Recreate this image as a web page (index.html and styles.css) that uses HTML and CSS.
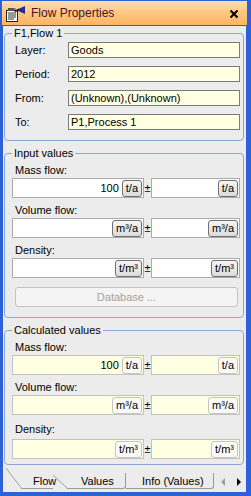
FILE: index.html
```html
<!doctype html>
<html>
<head>
<meta charset="utf-8">
<link rel="stylesheet" href="styles.css">
<title>Flow Properties</title>
</head>
<body>
<div class="window">
  <div class="titlebar">
    <svg class="title-icon" width="21" height="18" viewBox="0 0 21 18">
      <path d="M1 5 L11 3 L13 16 L3 17 Z" fill="#8a8a8a"/>
      <rect x="1.5" y="5.5" width="11" height="11" fill="#fff" stroke="#222"/>
      <path d="M3 8h8M3 10h8M3 12h8M3 14h6" stroke="#333" stroke-width="1"/>
      <rect x="3" y="3" width="6" height="3" fill="#555"/>
      <path d="M11 5 L20 1 L20 9 Z" fill="#1c2f9a"/>
      <path d="M10 7 L14 4" stroke="#222" stroke-width="1.5"/>
    </svg>
    <span class="title">Flow Properties</span>
    <svg class="close" width="10" height="10" viewBox="0 0 10 10">
      <path d="M1.5 1.5L8.5 8.5M8.5 1.5L1.5 8.5" stroke="#000" stroke-width="2"/>
    </svg>
  </div>

  <div class="panel">
    <fieldset class="group group-flow">
      <legend>F1,Flow 1</legend>
      <div class="prop-row"><span class="prop-label">Layer:</span><span class="prop-value">Goods</span></div>
      <div class="prop-row"><span class="prop-label">Period:</span><span class="prop-value">2012</span></div>
      <div class="prop-row"><span class="prop-label">From:</span><span class="prop-value">(Unknown),(Unknown)</span></div>
      <div class="prop-row"><span class="prop-label">To:</span><span class="prop-value">P1,Process 1</span></div>
    </fieldset>

    <fieldset class="group group-input">
      <legend>Input values</legend>
      <div class="field">
        <div class="field-label">Mass flow:</div>
        <div class="field-boxes">
          <div class="num-box num-main"><span class="num">100</span><span class="unit">t/a</span></div>
          <span class="pm">±</span>
          <div class="num-box num-dev"><span class="num"></span><span class="unit">t/a</span></div>
        </div>
      </div>
      <div class="field">
        <div class="field-label">Volume flow:</div>
        <div class="field-boxes">
          <div class="num-box num-main"><span class="num"></span><span class="unit">m³/a</span></div>
          <span class="pm">±</span>
          <div class="num-box num-dev"><span class="num"></span><span class="unit">m³/a</span></div>
        </div>
      </div>
      <div class="field">
        <div class="field-label">Density:</div>
        <div class="field-boxes">
          <div class="num-box num-main"><span class="num"></span><span class="unit">t/m³</span></div>
          <span class="pm">±</span>
          <div class="num-box num-dev"><span class="num"></span><span class="unit">t/m³</span></div>
        </div>
      </div>
      <button class="db-button" disabled>Database ...</button>
    </fieldset>

    <fieldset class="group group-calc">
      <legend>Calculated values</legend>
      <div class="field">
        <div class="field-label">Mass flow:</div>
        <div class="field-boxes">
          <div class="num-box num-main"><span class="num">100</span><span class="unit">t/a</span></div>
          <span class="pm">±</span>
          <div class="num-box num-dev"><span class="num"></span><span class="unit">t/a</span></div>
        </div>
      </div>
      <div class="field">
        <div class="field-label">Volume flow:</div>
        <div class="field-boxes">
          <div class="num-box num-main"><span class="num"></span><span class="unit">m³/a</span></div>
          <span class="pm">±</span>
          <div class="num-box num-dev"><span class="num"></span><span class="unit">m³/a</span></div>
        </div>
      </div>
      <div class="field field-last">
        <div class="field-label">Density:</div>
        <div class="field-boxes">
          <div class="num-box num-main"><span class="num"></span><span class="unit">t/m³</span></div>
          <span class="pm">±</span>
          <div class="num-box num-dev"><span class="num"></span><span class="unit">t/m³</span></div>
        </div>
      </div>
    </fieldset>

    <div class="tabs">
      <span class="slant slant-a"></span>
      <span class="tab tab-flow">Flow</span>
      <span class="slant slant-b"></span>
      <span class="tab tab-values">Values</span>
      <span class="tab tab-info">Info (Values)</span>
      <svg class="tab-scroll" width="32" height="12" viewBox="0 0 32 12">
        <path d="M11 2 L7 6 L11 10 Z" fill="#a0a0a0"/>
        <path d="M23 2 L27 6 L23 10 Z" fill="#000"/>
      </svg>
    </div>
  </div>
</div>
</body>
</html>
```

FILE: styles.css
```css
body {
    margin: 0;
    font-family: "Liberation Sans", Arial, sans-serif;
    font-size: 11px;
    color: #000;
}
.window {
    width: 251px;
    height: 496px;
    box-sizing: border-box;
    padding: 1px 5px 4px 3px;
    background: #2e60d8;
    display: flex;
    flex-direction: column;
}
.titlebar {
    height: 24px;
    margin: 0 -1px 1px -1px;
    padding: 0 8px 0 3px;
    display: flex;
    align-items: center;
    background: linear-gradient(#ffe0b0, #fdc883 45%, #fbb563);
}
.title-icon {
    margin-top: 1px;
}
.title {
    flex: 1;
    margin-left: 5px;
    font-size: 12px;
    color: #4a1030;
}
.close {
    margin-top: 1px;
}
.panel {
    flex: 1;
    background: #ececec;
    display: flex;
    flex-direction: column;
}

/* group boxes */
.group {
    margin: 6px 2px 0 1px;
    padding: 4px 3px 10px 7px;
    border: 1px solid #8ca6d4;
    border-radius: 4px;
    min-width: 0;
}
.group legend {
    padding: 0 2px;
    line-height: 13px;
}
.group-flow {
    margin-top: 1px;
    padding-top: 2px;
}
.group-calc {
    padding-bottom: 5px;
}

.prop-row {
    display: flex;
    align-items: center;
    padding-left: 3px;
    margin-bottom: 8px;
}
.prop-row:last-child {
    margin-bottom: 0;
}
.prop-label {
    width: 53px;
}
.prop-value {
    flex: 1;
    height: 16px;
    box-sizing: border-box;
    border: 1px solid #7a7a7a;
    background: #ffffe1;
    padding-left: 2px;
    line-height: 14px;
}

.field {
    margin-bottom: 6px;
}
.field:last-of-type {
    margin-bottom: 0;
}
.field-label {
    padding-left: 3px;
    line-height: 13px;
    margin-bottom: 1px;
}
.field-boxes {
    display: flex;
    align-items: center;
}
.num-box {
    height: 20px;
    box-sizing: border-box;
    border: 1px solid #a9a9a9;
    background: #fff;
    padding: 1px;
    display: flex;
    align-items: center;
    justify-content: flex-end;
}
.num-main {
    width: 132px;
}
.num-dev {
    flex: 1;
}
.num {
    padding-right: 3px;
}
.unit {
    height: 17px;
    box-sizing: border-box;
    padding: 0 3px;
    border: 1px solid #6f6f6f;
    border-radius: 3px;
    background: linear-gradient(#f4f4f4, #dcdcdc);
    line-height: 15px;
}
.pm {
    width: 7px;
    text-align: center;
}
.db-button {
    display: block;
    width: 223px;
    height: 20px;
    margin: 9px 0 0 3px;
    border: 1px solid #c3c3c3;
    border-radius: 3px;
    background: #f4f4f4;
    color: #a3a3a3;
    font-family: "Liberation Sans", Arial, sans-serif;
    font-size: 11px;
    padding: 0;
}

.group-calc .num-box {
    background: #ffffe1;
    border-color: #c2c2c2;
}
.group-calc .unit {
    background: #f9f9f9;
    border-color: #c4c4c4;
}
.group-calc .field-last {
    margin-top: 8px;
}
.group-calc .field-last .field-label {
    margin-bottom: 3px;
}

/* tab strip */
.tabs {
    height: 26px;
    margin-top: auto;
    display: flex;
    align-items: flex-start;
}
.slant {
    display: block;
    background: linear-gradient(to top right, transparent calc(50% - 0.7px), #9a9a9a 50%, transparent calc(50% + 0.7px));
}
.slant-a {
    width: 16px;
    height: 21px;
    margin: 2px 0 0 3px;
}
.slant-b {
    width: 15px;
    height: 14px;
    margin-top: 9px;
}
.tab {
    height: 16px;
    box-sizing: border-box;
    margin-top: 7px;
    padding-top: 2px;
    line-height: 13px;
    border-bottom: 1px solid #9a9a9a;
}
.tab-flow {
    width: 31px;
    padding-left: 11px;
    box-sizing: border-box;
}
.tab-values {
    width: 58px;
    padding-left: 13px;
    border-right: 1px solid #9a9a9a;
    border-bottom-right-radius: 3px;
}
.tab-info {
    width: 88px;
    padding-left: 16px;
    border-right: 1px solid #9a9a9a;
    border-bottom-right-radius: 3px;
}
.tab-scroll {
    margin: 10px 0 0 0;
}
```
